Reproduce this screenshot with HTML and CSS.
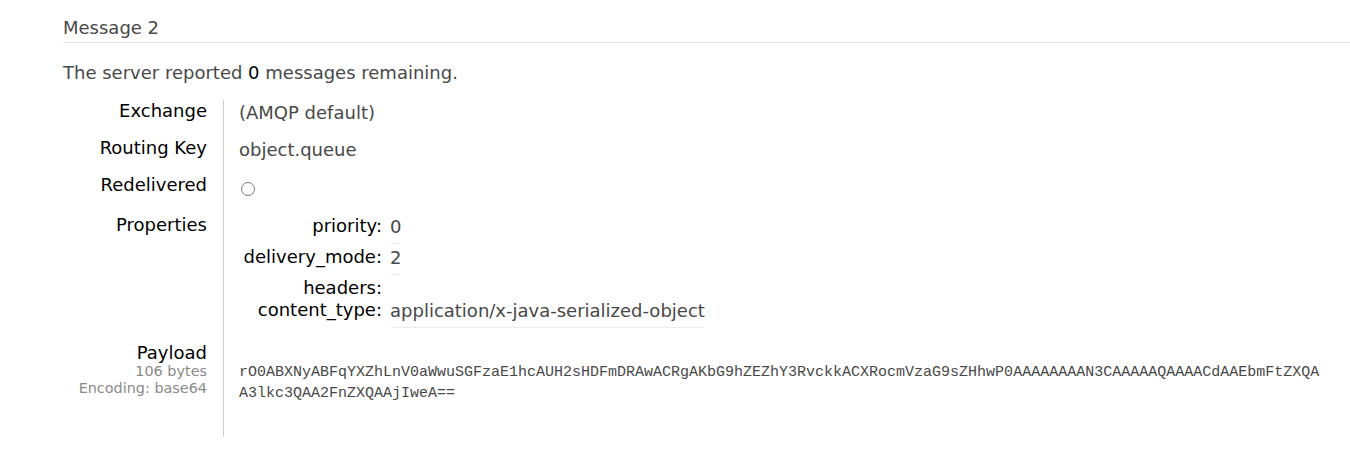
FILE: index.html
```html
<!DOCTYPE html>
<html>
<head>
<meta charset="utf-8">
<link rel="stylesheet" href="styles.css">
</head>
<body>
<div class="page">
  <h2 class="title">Message 2</h2>
  <p class="status">The server reported <span class="num">0</span> messages remaining.</p>
  <div class="facts">
    <div class="label">Exchange</div>
    <div class="value">(AMQP default)</div>

    <div class="label">Routing Key</div>
    <div class="value">object.queue</div>

    <div class="label">Redelivered</div>
    <div class="value value-radio"><span class="radio"></span></div>

    <div class="label">Properties</div>
    <div class="value value-props">
      <div class="props">
        <div class="prop-label">priority:</div>
        <div class="prop-value"><span class="box">0</span></div>
        <div class="prop-label">delivery_mode:</div>
        <div class="prop-value"><span class="box">2</span></div>
        <div class="prop-label">headers:</div>
        <div class="prop-value"></div>
        <div class="prop-label">content_type:</div>
        <div class="prop-value"><span class="box">application/x-java-serialized-object</span></div>
      </div>
    </div>

    <div class="label label-payload">
      <div class="payload-title">Payload</div>
      <div class="small">106 bytes</div>
      <div class="small">Encoding: base64</div>
    </div>
    <div class="value value-payload"><pre class="payload">rO0ABXNyABFqYXZhLnV0aWwuSGFzaE1hcAUH2sHDFmDRAwACRgAKbG9hZEZhY3RvckkACXRocmVzaG9sZHhwP0AAAAAAAAN3CAAAAAQAAAACdAAEbmFtZXQAA3lkc3QAA2FnZXQAAjIweA==</pre></div>
  </div>
</div>
</body>
</html>
```

FILE: styles.css
```css
html, body {
  margin: 0;
  padding: 0;
  background: #fff;
}

body {
  font-family: "DejaVu Sans", Verdana, sans-serif;
  font-size: 18px;
  color: #484848;
}

.page {
  padding: 17px 0 0 63px;
}

.title {
  margin: 0;
  font-size: 18px;
  font-weight: normal;
  line-height: 22px;
  color: #484848;
  padding-bottom: 3px;
  border-bottom: 1px solid #e2e2e2;
}

.status {
  margin: 19px 0 0 0;
  line-height: 22px;
}

.num {
  color: #000;
}

.facts {
  margin-top: 16px;
  display: grid;
  grid-template-columns: 160px 1fr;
}

.label {
  box-sizing: border-box;
  padding: 0 16px 15px 0;
  line-height: 22px;
  text-align: right;
  color: #000;
}

.value {
  padding: 2px 0 13px 15px;
  line-height: 22px;
  border-left: 1px solid #cfcfcf;
}

.value-radio {
  padding: 8px 0 18px 17px;
  line-height: 0;
}

.radio {
  display: inline-block;
  width: 12px;
  height: 12px;
  border: 1px solid #7a7a7a;
  border-radius: 50%;
  background: #fff;
}

.value-props {
  padding: 1px 0 12px 0;
}

.props {
  display: grid;
  grid-template-columns: 158px auto;
  column-gap: 8px;
  justify-content: start;
}

.prop-label {
  text-align: right;
  color: #000;
  line-height: 22px;
}

.prop-value {
  line-height: 22px;
}

.box {
  display: inline-block;
  padding: 1px 0 5px 0;
  margin-bottom: 2px;
  border-bottom: 1px solid #ececec;
  border-radius: 0 0 4px 4px;
}

.label-payload {
  padding-bottom: 0;
}

.payload-title {
  padding-top: 1px;
  line-height: 20px;
}

.small {
  font-size: 14.4px;
  line-height: 17px;
  color: #8a8a8a;
}

.value-payload {
  padding: 20px 0 33px 15px;
}

.payload {
  margin: 0;
  font-family: "Liberation Mono", "Courier New", monospace;
  font-size: 15px;
  line-height: 21px;
  color: #484848;
  max-width: 120ch;
  white-space: pre-wrap;
  word-break: break-all;
}
```
